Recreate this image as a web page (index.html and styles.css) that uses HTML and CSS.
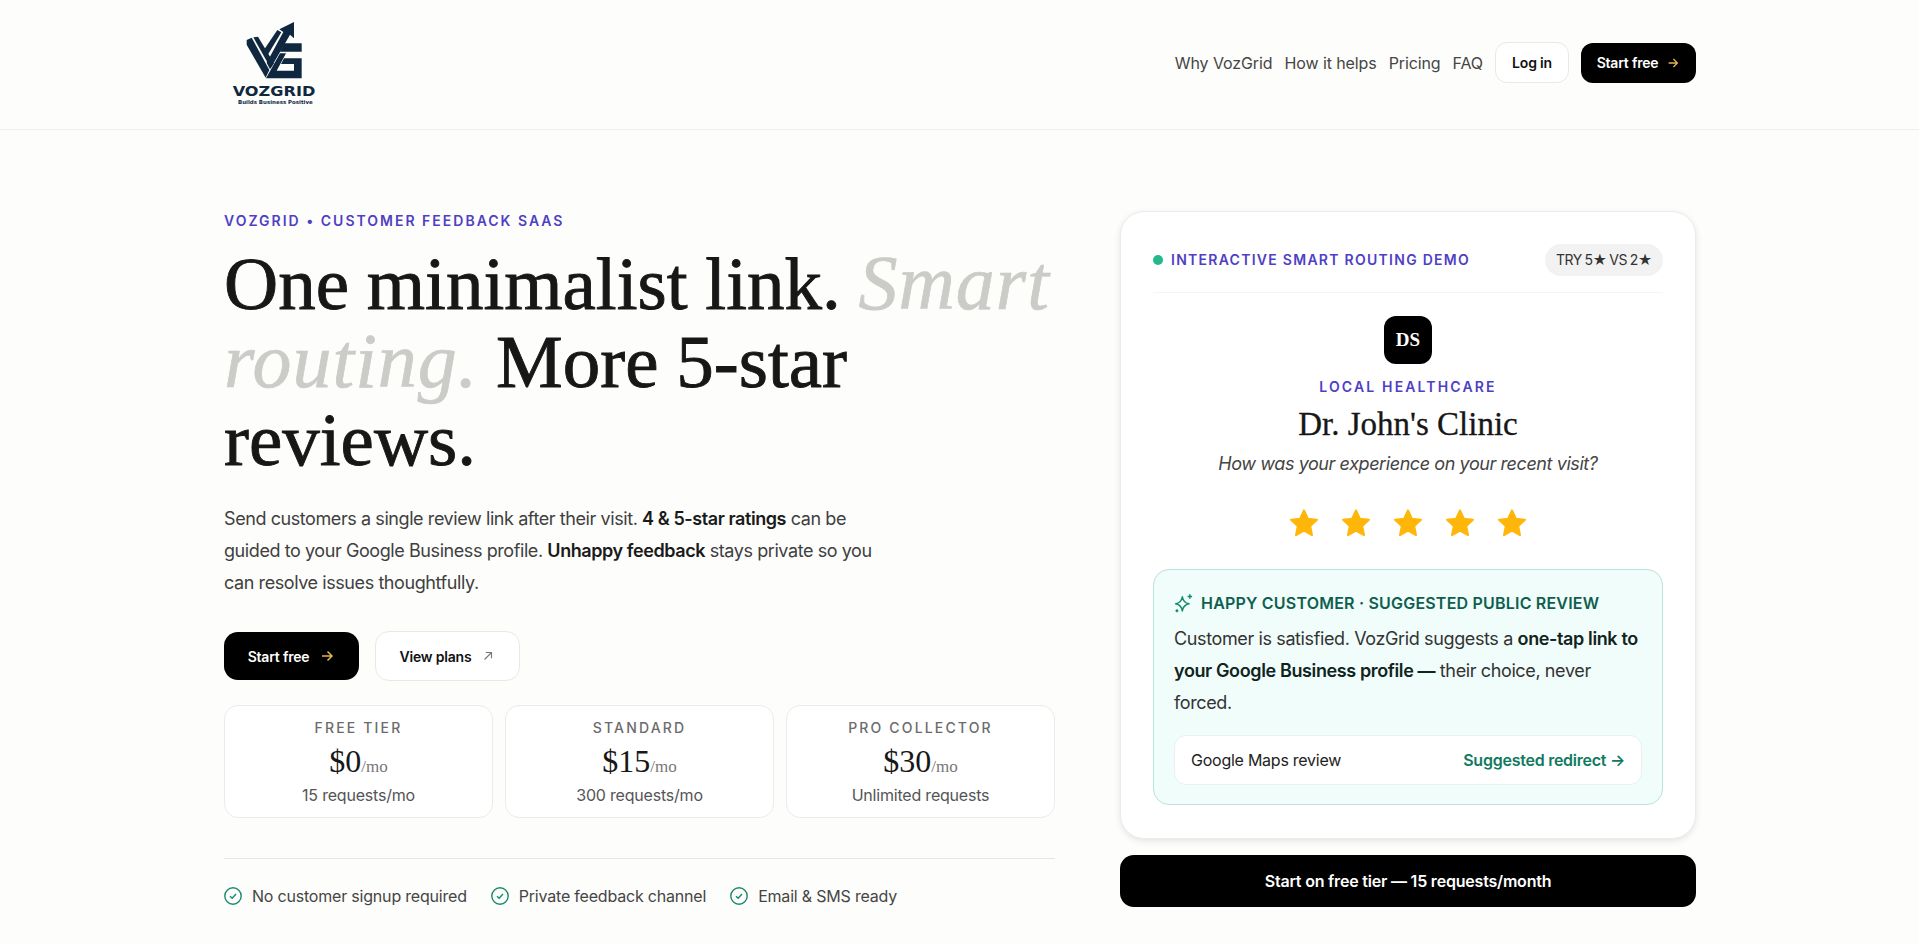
FILE: index.html
```html
<!DOCTYPE html>
<html lang="en">
<head>
<meta charset="utf-8">
<title>VozGrid</title>
<link rel="stylesheet" href="styles.css">
</head>
<body>
<header class="topbar">
  <div class="wrap topbar-in">
    <a class="logo" href="#" aria-label="VozGrid">
      <svg class="logo-svg" viewBox="72 24 300 300" width="100" height="100">
        <g fill="#10283f">
          <path d="M140 120 155 113 208 210 197 233 140 134Z"/>
          <path d="M160 112 174 110 222 190 212 205Z"/>
          <path d="M188 155 232 90 244 97 203 165Z"/>
          <path d="M238 88 282 66V115L270 104 224 184 210 208 200 188 250 96Z"/>
          <path d="M253 130H305V155H240Z"/>
          <path d="M240 160 198 235H305V175H252L243 192H282V212H230L258 160Z"/>
        </g>
        <text class="logo-name" x="98" y="289" textLength="248" lengthAdjust="spacingAndGlyphs">VOZGRID</text>
        <text class="logo-tag" x="114" y="312" textLength="224" lengthAdjust="spacingAndGlyphs">Builds Business Positive</text>
      </svg>
    </a>
    <nav class="nav">
      <a class="nav-link" href="#">Why VozGrid</a>
      <a class="nav-link" href="#">How it helps</a>
      <a class="nav-link" href="#">Pricing</a>
      <a class="nav-link" href="#">FAQ</a>
      <a class="btn btn-light btn-nav" href="#">Log in</a>
      <a class="btn btn-dark btn-nav" href="#">Start free
        <svg class="arrow" viewBox="0 0 16 16" width="14" height="14"><path d="M3 8h10M8.500 3.500 13 8l-4.500 4.500"/></svg>
      </a>
    </nav>
  </div>
</header>
<main class="wrap hero">
  <section class="left">
    <p class="eyebrow">VOZGRID • CUSTOMER FEEDBACK SAAS</p>
    <h1 class="headline">One minimalist link. <em>Smart<br>routing.</em> More 5-star<br>reviews.</h1>
    <p class="lead">Send customers a single review link after their visit. <strong>4 &amp; 5-star ratings</strong> can be guided to your Google Business profile. <strong>Unhappy feedback</strong> stays private so you can resolve issues thoughtfully.</p>
    <div class="actions">
      <a class="btn btn-dark btn-big" href="#">Start free
        <svg class="arrow" viewBox="0 0 16 16" width="16" height="16"><path d="M3 8h10M8.500 3.500 13 8l-4.500 4.500"/></svg>
      </a>
      <a class="btn btn-light btn-big btn-plans" href="#">View plans
        <svg class="arrow-out" viewBox="0 0 16 16" width="14" height="14"><path d="M4 12 12 4M5.500 4H12v6.500"/></svg>
      </a>
    </div>
    <div class="plans">
      <div class="plan"><div class="plan-name">FREE TIER</div><div class="plan-price">$0<span class="per">/mo</span></div><div class="plan-req">15 requests/mo</div></div>
      <div class="plan"><div class="plan-name">STANDARD</div><div class="plan-price">$15<span class="per">/mo</span></div><div class="plan-req">300 requests/mo</div></div>
      <div class="plan"><div class="plan-name">PRO COLLECTOR</div><div class="plan-price">$30<span class="per">/mo</span></div><div class="plan-req">Unlimited requests</div></div>
    </div>
    <ul class="checks">
      <li class="check"><svg class="check-ico" viewBox="0 0 18 18" width="18" height="18"><circle cx="9" cy="9" r="8.200"/><path d="M6 9.200 8.200 11.300 12 7"/></svg>No customer signup required</li>
      <li class="check"><svg class="check-ico" viewBox="0 0 18 18" width="18" height="18"><circle cx="9" cy="9" r="8.200"/><path d="M6 9.200 8.200 11.300 12 7"/></svg>Private feedback channel</li>
      <li class="check"><svg class="check-ico" viewBox="0 0 18 18" width="18" height="18"><circle cx="9" cy="9" r="8.200"/><path d="M6 9.200 8.200 11.300 12 7"/></svg>Email &amp; SMS ready</li>
    </ul>
  </section>
  <aside class="right">
    <div class="card">
      <div class="card-head">
        <div class="demo"><span class="dot"></span>INTERACTIVE SMART ROUTING DEMO</div>
        <span class="pill">TRY 5★ VS 2★</span>
      </div>
      <div class="biz">
        <div class="avatar">DS</div>
        <div class="biz-kind">LOCAL HEALTHCARE</div>
        <div class="biz-name">Dr. John's Clinic</div>
        <div class="biz-q">How was your experience on your recent visit?</div>
        <div class="stars">
          <svg class="star" viewBox="0 0 24 24" width="32" height="32"><path d="M12 2.500l2.900 6.300 6.800.8-5 4.700 1.300 6.800-6-3.400-6 3.400 1.300-6.800-5-4.700 6.800-.8z"/></svg>
          <svg class="star" viewBox="0 0 24 24" width="32" height="32"><path d="M12 2.500l2.900 6.300 6.800.8-5 4.700 1.300 6.800-6-3.400-6 3.400 1.300-6.800-5-4.700 6.800-.8z"/></svg>
          <svg class="star" viewBox="0 0 24 24" width="32" height="32"><path d="M12 2.500l2.900 6.300 6.800.8-5 4.700 1.300 6.800-6-3.400-6 3.400 1.300-6.800-5-4.700 6.800-.8z"/></svg>
          <svg class="star" viewBox="0 0 24 24" width="32" height="32"><path d="M12 2.500l2.900 6.300 6.800.8-5 4.700 1.300 6.800-6-3.400-6 3.400 1.300-6.800-5-4.700 6.800-.8z"/></svg>
          <svg class="star" viewBox="0 0 24 24" width="32" height="32"><path d="M12 2.500l2.900 6.300 6.800.8-5 4.700 1.300 6.800-6-3.400-6 3.400 1.300-6.800-5-4.700 6.800-.8z"/></svg>
        </div>
      </div>
      <div class="happy">
        <div class="happy-title">
          <svg class="spark" viewBox="0 0 24 24" width="20" height="20"><path d="M10 4.500C10.800 9.500 13 12 18 13 13 14 10.800 16.500 10 21.500 9.200 16.500 7 14 2 13 7 12 9.200 9.500 10 4.500Z"/><path d="M19 1.500v5.500M16.300 4.200h5.400M3.500 19.500v3.500M1.800 21.200h3.400"/></svg>
          HAPPY CUSTOMER · SUGGESTED PUBLIC REVIEW
        </div>
        <p class="happy-body">Customer is satisfied. VozGrid suggests a <strong>one-tap link to your Google Business profile —</strong> their choice, never forced.</p>
        <div class="maps"><span>Google Maps review</span><span class="redirect">Suggested redirect →</span></div>
      </div>
    </div>
    <a class="btn btn-dark cta" href="#">Start on free tier — 15 requests/month</a>
  </aside>
</main>
</body>
</html>
```
FILE: styles.css
```css
* { box-sizing: border-box; }
html, body { margin: 0; padding: 0; }
body {
  background: #fdfdfb;
  color: #1a1a1a;
  font-family: Inter, "Liberation Sans", sans-serif;
  height: 944px;
  overflow: hidden;
}
a { color: inherit; text-decoration: none; }
.wrap { width: 1472px; margin-left: 224px; }
.topbar { height: 130px; border-bottom: 1px solid #efefec; }
.topbar-in { display: flex; align-items: flex-start; justify-content: space-between; height: 129px; }
.logo { display: block; margin-top: 8px; }
.logo-svg { display: block; }
.logo-name { font: 700 42px "DejaVu Sans", sans-serif; fill: #10283f; }
.logo-tag { font: 700 16px "DejaVu Sans", sans-serif; fill: #10283f; }
.nav { display: flex; align-items: center; gap: 12px; margin-top: 42px; }
.nav-link { font-size: 16px; color: #454545; letter-spacing: -.1px; }
.btn { display: flex; align-items: center; justify-content: center; font-weight: 600; letter-spacing: -.2px; }
.btn-dark { background: #000; color: #fff; }
.btn-light { background: #fff; color: #111; border: 1px solid #e9e9e7; }
.btn-nav { height: 41px; font-size: 14px; border-radius: 12px; }
.btn-nav.btn-light { width: 74px; }
.btn-nav.btn-dark { width: 115px; gap: 8px; height: 40px; }
.arrow { fill: none; stroke: #e3b54a; stroke-width: 1.500; }
.arrow-out { fill: none; stroke: #777; stroke-width: 1.300; }
.hero { display: flex; justify-content: space-between; padding-top: 81px; }
.left { width: 831px; padding-top: 1px; }
.right { width: 576px; }
.eyebrow { margin: 0; font-size: 14px; line-height: 18px; font-weight: 600; letter-spacing: 2px; color: #4f3fc5; }
.headline { margin: 15px 0 0; font-family: "Liberation Serif", serif; font-weight: 400; font-size: 75px; line-height: 78px; color: #171717; -webkit-text-stroke: .9px #171717; white-space: nowrap; word-spacing: -1px; }
.headline em { color: #cbcbc8; -webkit-text-stroke: .7px #cbcbc8; font-size: 78px; line-height: 0; letter-spacing: 1px; }
.lead { margin: 24px 0 0; width: 660px; font-size: 18px; line-height: 32px; color: #404040; letter-spacing: -.42px; }
.lead strong { color: #1a1a1a; font-weight: 600; }
.actions { display: flex; align-items: center; gap: 16px; margin-top: 32px; }
.btn-big { height: 48px; font-size: 14px; border-radius: 14px; gap: 10px; width: 135px; }
.btn-plans { height: 50px; width: 145px; }
.plans { display: grid; grid-template-columns: repeat(3, 1fr); gap: 12px; margin-top: 24px; }
.plan { height: 113px; background: #fff; border: 1px solid #ebebe8; border-radius: 14px; text-align: center; padding-top: 12px; }
.plan-name { font-size: 14px; line-height: 20px; font-weight: 500; letter-spacing: 2.150px; color: #6b6b6b; }
.plan-price { font-family: "Liberation Serif", serif; font-size: 32px; line-height: 38px; margin-top: 4px; color: #171717; }
.per { font-size: 17px; color: #777; }
.plan-req { font-size: 16px; line-height: 22px; margin-top: -2px; color: #555; letter-spacing: -.2px; }
.checks { list-style: none; margin: 40px 0 0; padding: 27px 0 0; border-top: 1px solid #e6e6e3; display: flex; gap: 24px; }
.check { display: flex; align-items: center; gap: 10px; font-size: 16px; line-height: 20px; color: #454545; letter-spacing: -.2px; }
.check-ico { flex: none; fill: none; stroke: #1a8a6c; stroke-width: 1.400; }
.card { height: 628px; background: #fff; border: 1px solid #ecece9; border-radius: 24px; padding: 32px; box-shadow: 0 2px 6px rgba(0,0,0,.1); }
.card-head { display: flex; align-items: center; justify-content: space-between; height: 49px; padding-bottom: 17px; border-bottom: 1px solid #f4f4f2; }
.demo { display: flex; align-items: center; gap: 8px; font-size: 14px; font-weight: 600; letter-spacing: 1.270px; color: #4f3fc5; }
.dot { width: 10px; height: 10px; border-radius: 50%; background: #23b98a; }
.pill { height: 32px; width: 118px; justify-content: center; display: flex; align-items: center; border-radius: 16px; background: #f2f2f2; font-size: 14px; color: #333; letter-spacing: -.4px; word-spacing: -1px; }
.biz { display: flex; flex-direction: column; align-items: center; padding-top: 23px; }
.avatar { width: 48px; height: 48px; border-radius: 12px; background: #000; color: #fff; display: flex; align-items: center; justify-content: center; font: 700 19px "Liberation Serif", serif; }
.biz-kind { margin-top: 14px; font-size: 14px; line-height: 18px; font-weight: 600; letter-spacing: 2.150px; color: #4f3fc5; }
.biz-name { margin-top: 9px; font-family: "Liberation Serif", serif; font-size: 33px; line-height: 38px; color: #171717; -webkit-text-stroke: .3px #171717; }
.biz-q { margin-top: 8px; font-size: 18px; line-height: 26px; font-style: italic; color: #444; letter-spacing: -.42px; }
.stars { display: flex; gap: 20px; margin-top: 30px; }
.star { display: block; fill: #ffb60a; stroke: #ffb60a; stroke-width: 1.500; stroke-linejoin: round; }
.happy { margin-top: 30px; height: 236px; background: #f0fdfb; border: 1px solid #b9e3de; border-radius: 16px; padding: 22px 20px; }
.happy-title { display: flex; align-items: center; gap: 7px; height: 22px; font-size: 16px; font-weight: 600; color: #0f5f4e; letter-spacing: .2px; white-space: nowrap; }
.spark { flex: none; fill: none; stroke: #1a8a6c; stroke-width: 1.800; stroke-linejoin: round; }
.happy-body { margin: 9px 0 0; font-size: 18px; line-height: 32px; color: #333; letter-spacing: -.38px; }
.happy-body strong { font-weight: 600; color: #10241e; }
.maps { margin-top: 16px; height: 50px; display: flex; align-items: center; justify-content: space-between; padding: 0 16px; background: #fff; border: 1px solid #e8f1ef; border-radius: 12px; font-size: 16px; color: #222; letter-spacing: -.25px; }
.redirect { color: #107a5e; font-weight: 600; }
.cta { margin-top: 16px; height: 52px; border-radius: 14px; font-size: 16px; }
```
